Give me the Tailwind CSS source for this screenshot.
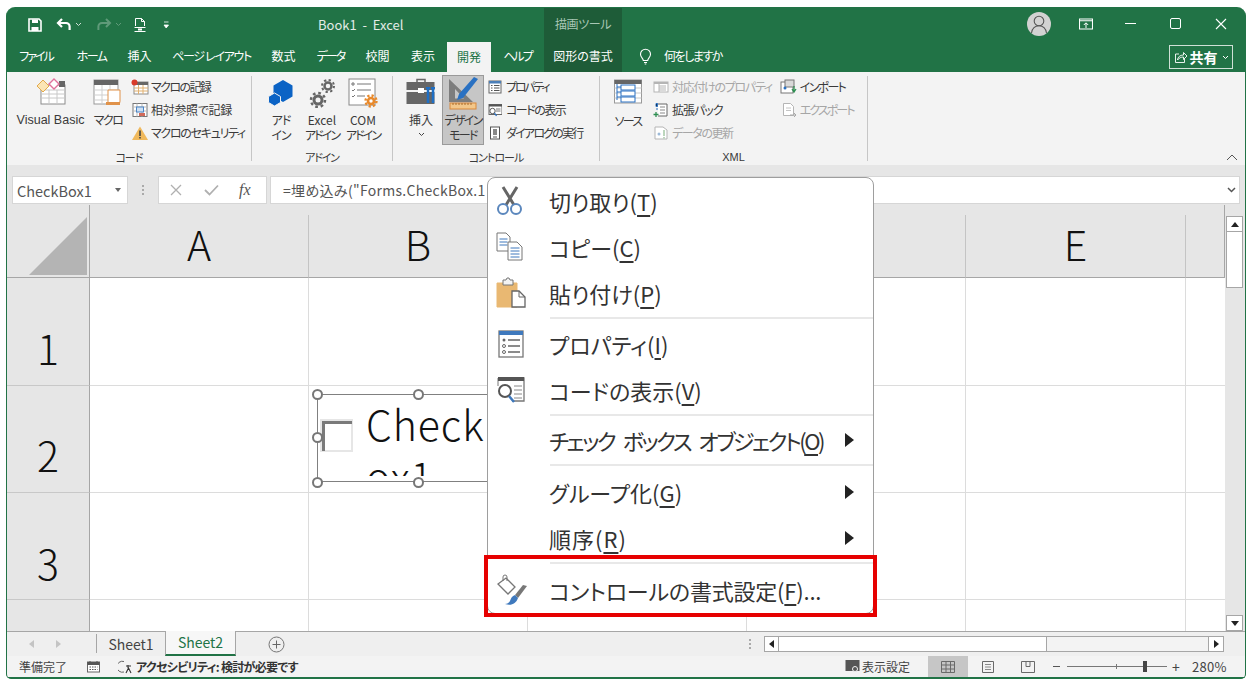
<!DOCTYPE html>
<html lang="ja">
<head>
<meta charset="UTF-8">
<title>Book1 - Excel</title>
<script src="https://cdn.jsdelivr.net/npm/@tailwindcss/browser@4"></script>
</head>
<body class="relative w-[1253px] h-[685px] overflow-hidden bg-white pt-[7px] pl-[6px] text-[#333] font-['Noto_Sans_CJK_JP','Liberation_Sans',sans-serif] [font-feature-settings:'palt']">

<div class="w-[1240px] h-[672px] rounded-t-[9px] rounded-b-[5px] overflow-hidden border-x border-b border-[#217346] bg-[#217346]">

  <!-- title bar -->
  <div class="flex h-[33px] text-white">
    <div class="flex items-center w-[537px] pl-[20px] pt-[2px]">
      <svg width="16" height="16" viewBox="0 0 16 16"><path d="M2 2h10l2 2v10H2z" fill="none" stroke="#fff" stroke-width="1.600"/><path d="M5 2.500h6v3.500H5zM4.500 10h7v4h-7z" fill="#fff"/></svg>
      <svg class="ml-[13px]" width="16" height="14" viewBox="0 0 16 14"><path d="M6 1 2 5l4 4M2.500 5H10a3.600 3.600 0 0 1 3.600 3.600V12" fill="none" stroke="#fff" stroke-width="2.200"/></svg>
      <svg class="ml-[3px]" width="7" height="5" viewBox="0 0 7 5"><path d="m1 1 2.500 2.500L6 1" fill="none" stroke="#cfe0d6"/></svg>
      <svg class="ml-[14px]" width="16" height="14" viewBox="0 0 16 14"><path d="m10 1 4 4-4 4M13.500 5H6a3.600 3.600 0 0 0-3.600 3.600V12" fill="none" stroke="#5f9a79" stroke-width="2"/></svg>
      <svg class="ml-[3px]" width="7" height="5" viewBox="0 0 7 5"><path d="m1 1 2.500 2.500L6 1" fill="none" stroke="#5f9a79"/></svg>
      <svg class="ml-[11px]" width="15" height="16" viewBox="0 0 15 16"><path d="M2.500 9V1.500h6l3 3V9M8.500 1.500v3h3" fill="none" stroke="#fff"/><rect x="1.500" y="10" width="11" height="1" fill="#fff"/><rect x="1.500" y="14" width="11" height="1" fill="#fff"/><rect x="5" y="11.500" width="4" height="2" fill="#fff"/></svg>
      <svg class="ml-[15px]" width="7" height="8" viewBox="0 0 7 8"><path d="M1 1h4.500M1 4h4.500L3.200 7z" fill="#fff" stroke="#fff" stroke-width=".8"/></svg>
      <span class="ml-[148px] text-[13px] whitespace-pre text-[#e3ece7] [font-feature-settings:normal]">Book1  -  Excel</span>
    </div>
    <div class="w-[78px] mt-[1px] bg-[#1e5c38] flex items-center justify-center text-[12px] text-[#a9c7b5] tracking-[-.4px]">描画ツール</div>
    <div class="flex-1 flex items-center justify-end pr-[2px]">
      <div class="w-[24px] h-[24px] rounded-full bg-[#d2d2d2] mr-[12px] overflow-hidden">
        <svg width="24" height="24" viewBox="0 0 24 24"><circle cx="12" cy="9" r="4.800" fill="none" stroke="#555" stroke-width="1.100"/><path d="M4.500 21c.8-4.800 3.600-7.200 7.500-7.200s6.700 2.400 7.500 7.200" fill="none" stroke="#555" stroke-width="1.100"/></svg>
      </div>
      <div class="w-[45px] flex justify-center"><svg width="14" height="12" viewBox="0 0 14 12"><path d="M.5 1h13v10H.500zM.5 2.800h13" fill="none" stroke="#fff" stroke-width="1.100"/><path d="M7 10V5M4.800 7 7 4.800 9.200 7" fill="none" stroke="#fff"/></svg></div>
      <div class="w-[45px] flex justify-center"><div class="w-[11px] h-px bg-white"></div></div>
      <div class="w-[45px] flex justify-center"><div class="w-[11px] h-[11px] rounded-[2px] border border-white"></div></div>
      <div class="w-[45px] flex justify-center"><svg width="12" height="12" viewBox="0 0 12 12"><path d="m1 1 10 10M11 1 1 11" stroke="#fff" stroke-width="1.100"/></svg></div>
    </div>
  </div>

  <!-- tabs -->
  <div class="flex h-[32px] text-[12px] text-white whitespace-nowrap">
    <div class="w-[58px] flex items-center justify-center tracking-[-2px]">ファイル</div>
    <div class="w-[53px] flex items-center justify-center tracking-[-1.600px]">ホーム</div>
    <div class="w-[43px] flex items-center justify-center">挿入</div>
    <div class="w-[101px] flex items-center justify-center tracking-[-1.300px]">ページ レイアウト</div>
    <div class="w-[43px] flex items-center justify-center">数式</div>
    <div class="w-[51px] flex items-center justify-center tracking-[-2px]">データ</div>
    <div class="w-[43px] flex items-center justify-center">校閲</div>
    <div class="w-[48px] flex items-center justify-center">表示</div>
    <div class="w-[44px] mt-[2px] bg-[#f3f3f3] text-[#217346] flex items-center justify-center">開発</div>
    <div class="w-[53px] flex items-center justify-center tracking-[-2px]">ヘルプ</div>
    <div class="w-[78px] bg-[#1e5c38] flex items-center justify-center">図形の書式</div>
    <div class="flex items-center ml-[17px]">
      <svg width="13" height="17" viewBox="0 0 13 17"><path d="M4.300 12.500c0-2-2.800-3-2.800-6.300a5 5 0 0 1 10 0c0 3.300-2.800 4.300-2.800 6.300zM5 14.500h3M5.700 16h1.600" fill="none" stroke="#fff" stroke-width="1.100"/></svg>
      <span class="ml-[12px] tracking-[-1.500px]">何をしますか</span>
    </div>
    <div class="ml-auto mr-[12px] mt-[5px] h-[24px] w-[64px] border border-[#cfe0d6] flex items-center justify-center">
      <svg width="14" height="13" viewBox="0 0 14 13"><path d="M5 3H1.500v8.500h9V8M3.500 9c.3-3 2.500-5 6-5V1.500L13 5 9.500 8.500V6C7 6 5 7 3.500 9z" fill="none" stroke="#fff" stroke-width=".9"/></svg>
      <span class="ml-[2px] text-[14px] font-bold">共有</span>
      <svg class="ml-[4px]" width="7" height="5" viewBox="0 0 7 5"><path d="m1 1 2.500 2.500L6 1" fill="none" stroke="#fff"/></svg>
    </div>
  </div>

  <!-- ribbon -->
  <div class="flex h-[93px] bg-[#f3f3f3] text-[12px] leading-[15px] text-[#3a3a3a] whitespace-nowrap">

    <!-- コード -->
    <div class="w-[244px] shrink-0 pt-[6px]">
      <div class="flex h-[72px] pl-[9px]">
        <div class="w-[69px] shrink-0 text-center text-[12.500px] [font-feature-settings:normal] font-['Liberation_Sans']">
          <div class="h-[34px] flex justify-center">
            <svg width="32" height="28" viewBox="0 0 32 28"><rect x="6" y="7" width="24" height="19" fill="#fff" stroke="#8c8c8c"/><path d="M6 12h24M6 16h24M6 20h24M14 12v14M22 12v14" stroke="#c8c8c8"/><rect x="24" y="3" width="6" height="6" fill="#666"/><path d="M8 2l6 6-6 6-6-6z" fill="#fbe5b4" stroke="#e3a94b"/><path d="M19 1l5 5-5 5-5-5z" fill="#fff" stroke="#e0719b" stroke-width="1.400"/></svg>
          </div>
          <div class="pt-[1px]">Visual Basic</div>
        </div>
        <div class="w-[30px] shrink-0 ml-[8px] text-center tracking-[-1.500px]">
          <div class="h-[34px] flex justify-center">
            <svg width="30" height="28" viewBox="0 0 30 28"><rect x="1" y="2" width="24" height="24" fill="#fff" stroke="#999"/><rect x="1" y="2" width="24" height="5" fill="#666"/><path d="M1 12h24M1 17h24M1 22h24M9 7v19M17 7v19" stroke="#cfcfcf"/><path d="M15 12h12v11c0 2-1 3-3 3H13c2 0 2-1 2-3z" fill="#fff" stroke="#e0924a"/><rect x="13" y="24" width="14" height="3" fill="#e0924a"/></svg>
          </div>
          マクロ
        </div>
        <div class="ml-[8px] shrink-0 -mt-[3px]">
          <div class="h-[23px] flex items-center">
            <svg width="18" height="16" viewBox="0 0 18 16"><rect x="3" y="3" width="14" height="12" fill="#fff" stroke="#8c8c8c"/><rect x="3" y="3" width="14" height="3" fill="#666"/><path d="M3 9h14M3 12h14M7.500 6v9M12 6v9" stroke="#e0b070"/><circle cx="3.500" cy="3.500" r="3" fill="#d83b2a"/></svg>
            <span class="ml-[2px] tracking-[-1.600px]">マクロの記録</span>
          </div>
          <div class="h-[23px] flex items-center">
            <svg width="18" height="16" viewBox="0 0 18 16"><rect x="2" y="1.500" width="14" height="13" fill="#fff" stroke="#777"/><path d="M2 5h14M2 9h14M6 1.500v13M11 1.500v13" stroke="#bbb"/><rect x="5.500" y="5" width="7" height="5" fill="#cfe0f2" stroke="#4c86c6"/><rect x="8" y="11" width="6" height="3" fill="#d06a5a"/></svg>
            <span class="ml-[2px] tracking-[-.3px]">相対参照で記録</span>
          </div>
          <div class="h-[23px] flex items-center">
            <svg width="18" height="16" viewBox="0 0 18 16"><path d="M9 1.500 17 15H1z" fill="#f0b95c"/><path d="M8.200 5.500h1.600v5.500H8.200zM8.200 12h1.600v1.600H8.200z" fill="#444"/></svg>
            <span class="ml-[2px] tracking-[-1.300px]">マクロのセキュリティ</span>
          </div>
        </div>
      </div>
      <div class="h-[14px] leading-[14px] text-[11px] text-center tracking-[-1px]">コード</div>
    </div>
    <div class="w-px h-[85px] mt-[4px] bg-[#c6c6c6]"></div>

    <!-- アドイン -->
    <div class="w-[140px] shrink-0 pt-[6px]">
      <div class="flex h-[72px] pl-[11px]">
        <div class="w-[36px] shrink-0 text-center tracking-[-1px]">
          <div class="h-[34px] flex justify-center">
            <svg width="28" height="28" viewBox="0 0 28 28"><path d="M16 2l9.500 5.500v11L16 24l-9.500-5.500v-11z" fill="#0b63c5"/><path d="M7.500 15l6 3.500v6L7.500 28l-6-3.500v-6z" fill="#0b63c5" stroke="#f3f3f3"/></svg>
          </div>
          アド<br>イン
        </div>
        <div class="w-[36px] shrink-0 ml-[5px] text-center">
          <div class="h-[34px] flex justify-center">
            <svg width="28" height="30" viewBox="0 0 28 30"><circle cx="20" cy="8" r="3.500" fill="none" stroke="#666" stroke-width="2.500"/><circle cx="20" cy="8" r="6" fill="none" stroke="#666" stroke-width="2" stroke-dasharray="2.300 2.400"/><circle cx="10" cy="22" r="4" fill="none" stroke="#666" stroke-width="3"/><circle cx="10" cy="22" r="7" fill="none" stroke="#666" stroke-width="2.500" stroke-dasharray="2.700 2.800"/></svg>
          </div>
          Excel<br><span class="block -mx-[2px] tracking-[-1.900px]">アドイン</span>
        </div>
        <div class="w-[36px] shrink-0 ml-[5px] text-center">
          <div class="h-[34px] flex justify-center">
            <svg width="30" height="30" viewBox="0 0 30 30"><rect x="1" y="1" width="26" height="26" fill="#fff" stroke="#888"/><path d="M9 6h14M9 12h14M9 18h8M4 5h2v2H4zM4 12l1 1 2-2M4 18l1 1 2-2" fill="none" stroke="#777"/><circle cx="23" cy="23" r="3" fill="none" stroke="#e8892b" stroke-width="2.600"/><circle cx="23" cy="23" r="5.500" fill="none" stroke="#e8892b" stroke-width="2.400" stroke-dasharray="2.200 2.100"/></svg>
          </div>
          COM<br><span class="block -mx-[2px] tracking-[-1.900px]">アドイン</span>
        </div>
      </div>
      <div class="h-[14px] leading-[14px] text-[11px] text-center tracking-[-1.200px]">アドイン</div>
    </div>
    <div class="w-px h-[85px] mt-[4px] bg-[#c6c6c6]"></div>

    <!-- コントロール -->
    <div class="w-[206px] shrink-0 pt-[6px]">
      <div class="flex h-[72px] pl-[12px]">
        <div class="w-[32px] shrink-0 text-center">
          <div class="h-[34px] flex justify-center">
            <svg width="31" height="30" viewBox="0 0 31 30"><path d="M11 4V1.500h8V4" fill="none" stroke="#666" stroke-width="1.500"/><rect x="0.500" y="4" width="28" height="8" fill="#666"/><rect x="0.500" y="14" width="28" height="12" fill="#666"/><rect x="12" y="10" width="6" height="5" fill="#fff"/><path d="M22 11v14M27 11v14" stroke="#1f6fc4" stroke-width="2.500"/><path d="M20 10h4M25 10h4" stroke="#1f6fc4" stroke-width="2"/></svg>
          </div>
          挿入
          <div class="flex justify-center mt-[5px]"><svg width="7" height="5" viewBox="0 0 7 5"><path d="m1 1 2.500 2.500L6 1" fill="none" stroke="#444"/></svg></div>
        </div>
        <div class="w-[42px] shrink-0 h-[70px] ml-[5px] -mt-[3px] bg-[#c6c6c6] border border-[#9a9a9a] text-center">
          <div class="h-[36px] flex justify-center">
            <svg width="34" height="36" viewBox="0 0 34 36"><path d="M3 3v23h24zM9 13l9 9.500H9z" fill="#7d7d7d" fill-rule="evenodd"/><path d="m32 3-4-2-15 17-2 6 6-2z" fill="#2a71c2"/><rect x="4" y="27" width="26" height="6" fill="#f3c78a" stroke="#d9883b"/><path d="M7 27v2M10 27v2M13 27v2M16 27v2M19 27v2M22 27v2M25 27v2" stroke="#a86a2b"/></svg>
          </div>
          <div class="-mx-[1px] tracking-[-1.700px]">デザイン<br>モード</div>
        </div>
        <div class="ml-[4px] shrink-0 -mt-[3px]">
          <div class="h-[23px] flex items-center">
            <svg width="14" height="14" viewBox="0 0 14 14"><rect x="1" y="1" width="12" height="12" fill="#fff" stroke="#666"/><rect x="1" y="1" width="12" height="2.500" fill="#4c7fb8"/><path d="M3 5.500h1.500M6 5.500h5.500M3 8h1.500M6 8h5.500M3 10.500h1.500M6 10.500h5.500" stroke="#555"/></svg>
            <span class="ml-[4px] tracking-[-2.200px]">プロパティ</span>
          </div>
          <div class="h-[23px] flex items-center">
            <svg width="14" height="14" viewBox="0 0 14 14"><rect x="1" y="1.500" width="13" height="10" fill="#fff" stroke="#666"/><rect x="1" y="1.500" width="13" height="2" fill="#555"/><path d="M8 6h4.500M8 8h4.500" stroke="#777"/><circle cx="4.500" cy="8" r="2.700" fill="#fff" stroke="#555"/><path d="m6.500 10 2 3" stroke="#2a71c2" stroke-width="1.300"/></svg>
            <span class="ml-[4px] tracking-[-1.500px]">コードの表示</span>
          </div>
          <div class="h-[23px] flex items-center">
            <svg width="14" height="14" viewBox="0 0 14 14"><rect x="2.500" y="1" width="9" height="12" fill="#fff" stroke="#555"/><rect x="5" y="3" width="4" height="6" fill="#888"/><path d="M5 11h4" stroke="#555"/></svg>
            <span class="ml-[4px] tracking-[-1.800px]">ダイアログの実行</span>
          </div>
        </div>
      </div>
      <div class="h-[14px] leading-[14px] text-[11px] text-center tracking-[-1px]">コントロール</div>
    </div>
    <div class="w-px h-[85px] mt-[4px] bg-[#c6c6c6]"></div>

    <!-- XML -->
    <div class="w-[267px] shrink-0 pt-[6px]">
      <div class="flex h-[72px] pl-[13px]">
        <div class="w-[30px] shrink-0 text-center tracking-[-1.700px]">
          <div class="h-[34px] flex justify-center">
            <svg width="28" height="27" viewBox="0 0 28 27"><rect x="0.500" y="2" width="27" height="23" fill="#fff" stroke="#999"/><rect x="0.500" y="2" width="27" height="4" fill="#666"/><path d="M.5 10h27M.5 15h27M.5 20h27" stroke="#c8c8c8"/><path d="M3 6v16M3 9h4M3 14h4M3 19h4" fill="none" stroke="#2a71c2"/><rect x="7" y="7" width="14" height="5" fill="#fff" stroke="#2a71c2"/><rect x="7" y="13" width="14" height="5" fill="#fff" stroke="#2a71c2"/><rect x="7" y="19" width="14" height="5" fill="#fff" stroke="#2a71c2"/></svg>
          </div>
          <div class="mt-[1px]">ソース</div>
        </div>
        <div class="ml-[10px] shrink-0 -mt-[3px]">
          <div class="h-[23px] flex items-center text-[#a6a6a6]">
            <svg width="16" height="14" viewBox="0 0 16 14"><rect x="1" y="2" width="14" height="10" fill="#fff" stroke="#b5b5b5"/><rect x="1" y="2" width="14" height="2" fill="#b5b5b5"/><path d="M6 6h7M6 8h7M6 10h7M6 4v8" stroke="#b5b5b5"/></svg>
            <span class="ml-[3px] tracking-[-1.300px]">対応付けのプロパティ</span>
          </div>
          <div class="h-[23px] flex items-center">
            <svg width="16" height="16" viewBox="0 0 16 16"><path d="M5 2h9v12H5" fill="#fff" stroke="#666"/><path d="M7 5h5M7 8h5M7 11h5" stroke="#888"/><path d="M3 1.500h1.500v3H3zM3 7h2" stroke="#2a71c2"/><path d="M3 10v5M.5 12.500h5" stroke="#2f8f52" stroke-width="1.300"/></svg>
            <span class="ml-[3px] tracking-[-1px]">拡張パック</span>
          </div>
          <div class="h-[23px] flex items-center text-[#a6a6a6]">
            <svg width="16" height="16" viewBox="0 0 16 16"><path d="M2 2h8l4 3v9H2z" fill="#fff" stroke="#b5b5b5"/><circle cx="6" cy="9" r="1.500" fill="#9dbad8"/><path d="M11 5v6M11 12v1.500" stroke="#a6c8a6" stroke-width="1.500"/></svg>
            <span class="ml-[3px] tracking-[-1.400px]">データの更新</span>
          </div>
        </div>
        <div class="ml-[8px] shrink-0 -mt-[3px]">
          <div class="h-[23px] flex items-center">
            <svg width="17" height="16" viewBox="0 0 17 16"><rect x="1" y="3" width="12" height="11" fill="#fff" stroke="#777"/><rect x="5" y="1" width="9" height="7" fill="#d9d9d9" stroke="#777"/><circle cx="5" cy="9" r="1.500" fill="#2a71c2"/><path d="M14 7v6M12 10l2 3 2-3" fill="none" stroke="#2f8f52" stroke-width="1.300"/></svg>
            <span class="ml-[3px] tracking-[-1.700px]">インポート</span>
          </div>
          <div class="h-[23px] flex items-center text-[#a6a6a6] pl-[2px]">
            <svg width="15" height="16" viewBox="0 0 15 16"><path d="M1.500 1.500h7l3 3v9h-10z" fill="#fff" stroke="#b5b5b5"/><path d="M4 6h5M4 8.500h5" stroke="#c4c4c4"/><path d="M8 13h6M12 11l2 2-2 2" fill="none" stroke="#a8a8a8"/></svg>
            <span class="ml-[3px] tracking-[-1.900px]">エクスポート</span>
          </div>
        </div>
      </div>
      <div class="h-[14px] leading-[14px] text-[11px] text-center font-['Liberation_Sans']">XML</div>
    </div>
    <div class="w-px h-[85px] mt-[4px] bg-[#c6c6c6]"></div>

    <div class="flex-1 flex justify-end items-end pr-[7px] pb-[4px]">
      <svg width="12" height="7" viewBox="0 0 12 7"><path d="m1 6 5-5 5 5" fill="none" stroke="#555"/></svg>
    </div>
  </div>

  <!-- formula bar -->
  <div class="flex h-[40px] bg-[#e6e6e6] pt-[11px] pl-[5px]">
    <div class="w-[116px] h-[28px] bg-white border border-[#d6d6d6] flex items-center pl-[4px] text-[14.500px] text-[#555] [font-feature-settings:normal]">
      <span class="pt-[2px]">CheckBox1</span>
      <svg class="ml-auto mr-[6px]" width="6" height="4" viewBox="0 0 6 4"><path d="M0 0h6L3 4z" fill="#666"/></svg>
    </div>
    <div class="w-[30px] h-[28px] flex flex-col items-center justify-center gap-[2px]">
      <div class="w-[2px] h-[2px] bg-[#aaa]"></div><div class="w-[2px] h-[2px] bg-[#aaa]"></div><div class="w-[2px] h-[2px] bg-[#aaa]"></div>
    </div>
    <div class="w-[109px] h-[28px] bg-white border border-[#d6d6d6] flex items-center pl-[11px]">
      <svg width="12" height="12" viewBox="0 0 12 12"><path d="m1 1 10 10M11 1 1 11" stroke="#b0b0b0" stroke-width="1.300"/></svg>
      <svg class="ml-[22px]" width="15" height="12" viewBox="0 0 15 12"><path d="m1 6 4.500 4.500L14 1.500" fill="none" stroke="#b0b0b0" stroke-width="1.800"/></svg>
      <span class="ml-[20px] font-['Liberation_Serif'] italic text-[16px] text-[#555]">fx</span>
    </div>
    <div class="w-[970px] h-[28px] ml-[3px] bg-white border border-[#d6d6d6] flex items-center pl-[12px] text-[14px] text-[#555] tracking-[.3px] whitespace-nowrap">
      =埋め込み("Forms.CheckBox.1
      <svg class="ml-auto mr-[3px]" width="9" height="6" viewBox="0 0 9 6"><path d="m1 1 3.500 3.500L8 1" fill="none" stroke="#555" stroke-width="1.500"/></svg>
    </div>
  </div>

  <!-- sheet -->
  <div class="flex h-[426px] bg-[#e6e6e6]">
    <div class="w-[1218px] grid grid-cols-[83px_219px_219px_219px_219px_220px_39px] grid-rows-[73px_108px_107px_107px_31px] text-[41px] leading-none font-light text-[#111] border-r border-[#a6a6a6]">
      <div class="border-r border-b border-[#a6a6a6] flex items-end justify-end pr-[2px] pb-[2px]">
        <svg width="58" height="58" viewBox="0 0 58 58"><path d="M0 58 58 0v58z" fill="#b4b4b4"/></svg>
      </div>
      <div class="mt-[10px] pb-[6px] border-r border-b border-r-[#c4c4c4] border-b-[#a6a6a6] flex items-center justify-center">A</div>
      <div class="mt-[10px] pb-[6px] border-r border-b border-r-[#c4c4c4] border-b-[#a6a6a6] flex items-center justify-center">B</div>
      <div class="mt-[10px] pb-[6px] border-r border-b border-r-[#c4c4c4] border-b-[#a6a6a6] flex items-center justify-center">C</div>
      <div class="mt-[10px] pb-[6px] border-r border-b border-r-[#c4c4c4] border-b-[#a6a6a6] flex items-center justify-center">D</div>
      <div class="mt-[10px] pb-[6px] border-r border-b border-r-[#c4c4c4] border-b-[#a6a6a6] flex items-center justify-center">E</div>
      <div class="mt-[10px] border-b border-[#a6a6a6]"></div>

      <div class="border-r border-b border-r-[#a6a6a6] border-b-[#c8c8c8] flex items-end justify-center pb-[17px]">1</div>
      <div class="bg-white border-r border-b border-[#dcdcdc]"></div>
      <div class="bg-white border-r border-b border-[#dcdcdc]"></div>
      <div class="bg-white border-r border-b border-[#dcdcdc]"></div>
      <div class="bg-white border-r border-b border-[#dcdcdc]"></div>
      <div class="bg-white border-r border-b border-[#dcdcdc]"></div>
      <div class="bg-white border-b border-[#dcdcdc]"></div>

      <div class="border-r border-b border-r-[#a6a6a6] border-b-[#c8c8c8] flex items-end justify-center pb-[17px]">2</div>
      <div class="bg-white border-r border-b border-[#dcdcdc]"></div>
      <div class="bg-white border-r border-b border-[#dcdcdc]"></div>
      <div class="bg-white border-r border-b border-[#dcdcdc]"></div>
      <div class="bg-white border-r border-b border-[#dcdcdc]"></div>
      <div class="bg-white border-r border-b border-[#dcdcdc]"></div>
      <div class="bg-white border-b border-[#dcdcdc]"></div>

      <div class="border-r border-b border-r-[#a6a6a6] border-b-[#c8c8c8] flex items-end justify-center pb-[16px]">3</div>
      <div class="bg-white border-r border-b border-[#dcdcdc]"></div>
      <div class="bg-white border-r border-b border-[#dcdcdc]"></div>
      <div class="bg-white border-r border-b border-[#dcdcdc]"></div>
      <div class="bg-white border-r border-b border-[#dcdcdc]"></div>
      <div class="bg-white border-r border-b border-[#dcdcdc]"></div>
      <div class="bg-white border-b border-[#dcdcdc]"></div>

      <div class="border-r border-[#a6a6a6]"></div>
      <div class="bg-white border-r border-[#dcdcdc]"></div>
      <div class="bg-white border-r border-[#dcdcdc]"></div>
      <div class="bg-white border-r border-[#dcdcdc]"></div>
      <div class="bg-white border-r border-[#dcdcdc]"></div>
      <div class="bg-white border-r border-[#dcdcdc]"></div>
      <div class="bg-white"></div>
    </div>
    <!-- vertical scrollbar -->
    <div class="flex-1 flex flex-col pl-[1px] pr-[2px] pt-[11px]">
      <div class="h-[16px] bg-white border border-[#a6a6a6] flex items-center justify-center"><svg width="8" height="5" viewBox="0 0 8 5"><path d="M4 0l4 5H0z" fill="#222"/></svg></div>
      <div class="h-[56px] bg-white border-x border-b border-[#a6a6a6]"></div>
      <div class="flex-1"></div>
      <div class="h-[16px] bg-white border border-[#a6a6a6] flex items-center justify-center"><svg width="8" height="5" viewBox="0 0 8 5"><path d="M0 0h8L4 5z" fill="#222"/></svg></div>
    </div>
  </div>

  <!-- sheet tabs -->
  <div class="flex h-[25px] bg-[#efefef] border-t border-[#a6a6a6] text-[14px] text-[#444] [font-feature-settings:normal]">
    <div class="w-[89px] flex items-center pl-[22px] gap-[22px]">
      <svg width="5" height="8" viewBox="0 0 5 8"><path d="M5 0v8L0 4z" fill="#c4c4c4"/></svg>
      <svg width="5" height="8" viewBox="0 0 5 8"><path d="M0 0v8l5-4z" fill="#c4c4c4"/></svg>
    </div>
    <div class="w-px h-[19px] mt-[2px] bg-[#a6a6a6]"></div>
    <div class="w-[68px] flex items-center justify-center">Sheet1</div>
    <div class="w-[71px] -mt-px bg-[#f7f7f7] border-x border-b-2 border-x-[#a6a6a6] border-b-[#217346] text-[#217346] flex items-center justify-center">Sheet2</div>
    <div class="ml-[32px] flex items-center">
      <svg width="17" height="17" viewBox="0 0 17 17"><circle cx="8.500" cy="8.500" r="7.500" fill="none" stroke="#777"/><path d="M8.500 4.500v8M4.500 8.500h8" stroke="#666"/></svg>
    </div>
    <div class="ml-[455px] w-[20px] flex flex-col items-center justify-center gap-[2px]">
      <div class="w-[2px] h-[2px] bg-[#aaa]"></div><div class="w-[2px] h-[2px] bg-[#aaa]"></div><div class="w-[2px] h-[2px] bg-[#aaa]"></div>
    </div>
    <div class="ml-[4px] w-[460px] h-[16px] mt-[4px] flex border border-[#a6a6a6] bg-[#f3f3f3]">
      <div class="w-[14px] bg-white border-r border-[#a6a6a6] flex items-center justify-center"><svg width="5" height="8" viewBox="0 0 5 8"><path d="M5 0v8L0 4z" fill="#222"/></svg></div>
      <div class="w-[268px] bg-white border-r border-[#a6a6a6]"></div>
      <div class="flex-1"></div>
      <div class="w-[15px] bg-white border-l border-[#a6a6a6] flex items-center justify-center"><svg width="5" height="8" viewBox="0 0 5 8"><path d="M0 0v8l5-4z" fill="#222"/></svg></div>
    </div>
  </div>

  <!-- status bar -->
  <div class="flex h-[21px] items-center bg-[#f3f3f3] text-[12px] text-[#444] whitespace-nowrap">
    <span class="ml-[12px] w-[48px]">準備完了</span>
    <svg class="ml-[20px]" width="13" height="13" viewBox="0 0 13 13"><rect x="0.500" y="2" width="12" height="10" fill="#fff" stroke="#666"/><rect x="0.500" y="2" width="12" height="3" fill="#555"/><path d="M3 1v2M10 1v2" stroke="#555"/><path d="M2.500 7h8M2.500 9.500h8" stroke="#555" stroke-dasharray="1.500 1"/></svg>
    <svg class="ml-[18px]" width="16" height="14" viewBox="0 0 16 14"><path d="M6 1.500A5.500 5.500 0 1 0 6 12" fill="none" stroke="#666"/><path d="M10 5v3M8 6h5M8 13l2.500-5 2.500 5" fill="none" stroke="#333" stroke-width="1.100"/></svg>
    <span class="ml-[2px] font-bold text-[#333] tracking-[-.7px]">アクセシビリティ: 検討が必要です</span>
    <div class="ml-auto flex items-center h-full">
      <svg width="16" height="15" viewBox="0 0 16 15"><rect x="0.500" y="1" width="14" height="11" fill="#555"/><circle cx="10" cy="10" r="2.500" fill="#555" stroke="#f3f3f3"/></svg>
      <span class="ml-[1px] w-[48px]">表示設定</span>
      <div class="ml-[18px] w-[40px] h-full bg-[#c6c6c6] flex items-center justify-center">
        <svg width="14" height="12" viewBox="0 0 14 12"><path d="M.5.500h13v11H.500zM.5 4h13M.5 8h13M5 .5v11M9.500.5v11" fill="none" stroke="#6a6a6a"/></svg>
      </div>
      <div class="w-[40px] flex items-center justify-center">
        <svg width="12" height="12" viewBox="0 0 12 12"><path d="M.5.500h11v11H.500z" fill="none" stroke="#6a6a6a"/><path d="M3 3.500h6M3 6h6M3 8.500h6" stroke="#8a8a8a"/></svg>
      </div>
      <div class="w-[40px] flex items-center justify-center">
        <svg width="14" height="12" viewBox="0 0 14 12"><path d="M.5.500h13v11H.500zM5 .5v5h4v-5" fill="none" stroke="#6a6a6a"/></svg>
      </div>
      <div class="ml-[5px] w-[7px] h-px bg-[#555]"></div>
      <div class="relative ml-[7px] w-[100px] h-px bg-[#777]">
        <div class="absolute left-[49px] -top-[2px] w-px h-[5px] bg-[#777]"></div>
        <div class="absolute left-[76px] -top-[5px] w-[4px] h-[11px] bg-[#444]"></div>
      </div>
      <span class="ml-[4px] w-[10px] text-[14px] leading-none text-center">+</span>
      <span class="ml-[11px] w-[36px] text-[13px] [font-feature-settings:normal] tracking-[.3px]">280%</span>
      <div class="w-[17px]"></div>
    </div>
  </div>
</div>

<!-- selected checkbox control -->
<div class="absolute left-[317px] top-[394px] w-[240px] h-[88px] border border-[#808080] overflow-hidden [font-feature-settings:normal]">
  <div class="absolute left-[2px] top-[24px] w-[33px] h-[33px] border-2 border-[#e6e6e6] bg-white">
    <div class="w-[30px] h-[30px] border-t-[3px] border-l-[3px] border-[#7a7a7a]"></div>
  </div>
  <div class="absolute left-[48px] top-[2px] h-[79px] overflow-hidden text-[41px] leading-[52px] font-light text-[#111] tracking-[1px]">CheckB<br>ox1</div>
</div>
<div class="absolute left-[312px] top-[389px] w-[11px] h-[11px] rounded-full border-2 border-[#777] bg-white"></div>
<div class="absolute left-[413px] top-[389px] w-[11px] h-[11px] rounded-full border-2 border-[#777] bg-white"></div>
<div class="absolute left-[312px] top-[432px] w-[11px] h-[11px] rounded-full border-2 border-[#777] bg-white"></div>
<div class="absolute left-[312px] top-[477px] w-[11px] h-[11px] rounded-full border-2 border-[#777] bg-white"></div>
<div class="absolute left-[413px] top-[477px] w-[11px] h-[11px] rounded-full border-2 border-[#777] bg-white"></div>

<!-- context menu -->
<div class="absolute left-[487px] top-[177px] w-[387px] h-[437px] rounded-[8px] bg-white border border-[#9e9e9e] pt-[1px] overflow-hidden text-[22px] text-[#333]">
  <div class="h-[46px] pb-[2px] flex items-center">
    <div class="w-[61px] flex justify-start pl-[7px]">
      <svg width="30" height="30" viewBox="0 0 30 30"><path d="M8 1l11 18M22 1 11 19" stroke="#666" stroke-width="3"/><circle cx="8" cy="23" r="5" fill="none" stroke="#5b87bd" stroke-width="2"/><circle cx="21" cy="23" r="5" fill="none" stroke="#5b87bd" stroke-width="2"/></svg>
    </div>
    <span>切り取り(<span class="underline underline-offset-4">T</span>)</span>
  </div>
  <div class="h-[46px] pb-[2px] flex items-center">
    <div class="w-[61px] flex justify-start pl-[8px]">
      <svg width="28" height="30" viewBox="0 0 28 30"><path d="M1 1h9l4 4v14H1z" fill="#fff" stroke="#777"/><path d="M3.500 7h8M3.500 10h8M3.500 13h8" stroke="#3f79bd"/><path d="M12 10h9l5 5v13H12z" fill="#fff" stroke="#777"/><path d="M14.500 16h9M14.500 19h9M14.500 22h9M14.500 25h9" stroke="#3f79bd"/></svg>
    </div>
    <span>コピー(<span class="underline underline-offset-4">C</span>)</span>
  </div>
  <div class="h-[46px] pb-[2px] flex items-center">
    <div class="w-[61px] flex justify-start pl-[8px]">
      <svg width="30" height="32" viewBox="0 0 30 32"><path d="M1 6h20v24H1z" fill="#e9b872" stroke="#e9b872" stroke-linejoin="round"/><path d="M7 6V3h3l1-2h2l1 2h3v5H7z" fill="#f3f3f3" stroke="#777"/><path d="M16 14h7l6 6v10H16z" fill="#fff" stroke="#666" stroke-width="1.300"/><path d="M23 14v6h6" fill="none" stroke="#666"/></svg>
    </div>
    <span>貼り付け(<span class="underline underline-offset-4">P</span>)</span>
  </div>
  <div class="ml-[62px] h-[2px] mb-[3px] bg-[#e8e8e8]"></div>
  <div class="h-[46px] pb-[2px] flex items-center">
    <div class="w-[61px] flex justify-start pl-[10px]">
      <svg width="26" height="28" viewBox="0 0 26 28"><rect x="1" y="1" width="24" height="26" fill="#fff" stroke="#777" stroke-width="1.300"/><rect x="1" y="1" width="24" height="4" fill="#3f79bd"/><path d="M10 10h12M10 16h12M10 22h12" stroke="#666" stroke-width="1.300"/><circle cx="6" cy="10" r="1.500" fill="#666"/><circle cx="6" cy="16" r="1.500" fill="none" stroke="#666"/><circle cx="6" cy="22" r="1.500" fill="none" stroke="#666"/></svg>
    </div>
    <span>プロパティ(<span class="underline underline-offset-4">I</span>)</span>
  </div>
  <div class="h-[46px] pb-[2px] flex items-center">
    <div class="w-[61px] flex justify-start pl-[8px]">
      <svg width="30" height="28" viewBox="0 0 30 28"><path d="M2 2h26v23H16" fill="#fff" stroke="#777" stroke-width="1.300"/><path d="M2 2v8" stroke="#777"/><rect x="2" y="1" width="26" height="4" fill="#555"/><path d="M18 10h8M18 14h8M18 18h8M18 22h8" stroke="#888"/><circle cx="9" cy="15" r="6" fill="#fff" stroke="#555" stroke-width="2"/><path d="m13 20 5 6" stroke="#3f79bd" stroke-width="2.500"/></svg>
    </div>
    <span>コードの表示(<span class="underline underline-offset-4">V</span>)</span>
  </div>
  <div class="ml-[62px] h-[2px] mb-[2px] bg-[#e8e8e8]"></div>
  <div class="h-[46px] pb-[2px] flex items-center pl-[61px]">
    <span class="whitespace-pre tracking-[-2.500px] [word-spacing:6px]">チェック ボックス オブジェクト(<span class="underline underline-offset-4">O</span>)</span>
    <svg class="absolute left-[357px]" width="9" height="14" viewBox="0 0 9 14"><path d="M0 0l9 7-9 7z" fill="#222"/></svg>
  </div>
  <div class="ml-[62px] h-[2px] mb-[4px] bg-[#e8e8e8]"></div>
  <div class="h-[46px] pb-[2px] flex items-center pl-[61px]">
    <span>グループ化(<span class="underline underline-offset-4">G</span>)</span>
    <svg class="absolute left-[357px]" width="9" height="14" viewBox="0 0 9 14"><path d="M0 0l9 7-9 7z" fill="#222"/></svg>
  </div>
  <div class="h-[46px] pb-[2px] flex items-center pl-[61px]">
    <span class="tracking-[1px]">順序(<span class="underline underline-offset-4">R</span>)</span>
    <svg class="absolute left-[357px]" width="9" height="14" viewBox="0 0 9 14"><path d="M0 0l9 7-9 7z" fill="#222"/></svg>
  </div>
  <div class="ml-[62px] h-[2px] mb-[4px] bg-[#e8e8e8]"></div>
  <div class="h-[46px] pb-[2px] flex items-center">
    <div class="w-[61px] flex justify-start pl-[8px]">
      <svg width="32" height="32" viewBox="0 0 32 32"><path d="M2 10l8-6 9 9-7 7z" fill="#fff" stroke="#777" stroke-width="1.300"/><path d="M7 7V3a2 2 0 0 1 4 0v4" fill="none" stroke="#777"/><path d="m31 12-4-1-8 10 3 3z" fill="#777"/><path d="M19 21c-3 1-4 3-5 6-1 2-3 3-5 3 6 2 11 0 13-6z" fill="#3f79bd"/></svg>
    </div>
    <span class="tracking-[-.2px]">コントロールの書式設定(<span class="underline underline-offset-4">F</span>)...</span>
  </div>
</div>

<!-- red highlight -->
<div class="absolute left-[484px] top-[555px] w-[393px] h-[62px] border-4 border-[#e60000]"></div>

</body>
</html>
